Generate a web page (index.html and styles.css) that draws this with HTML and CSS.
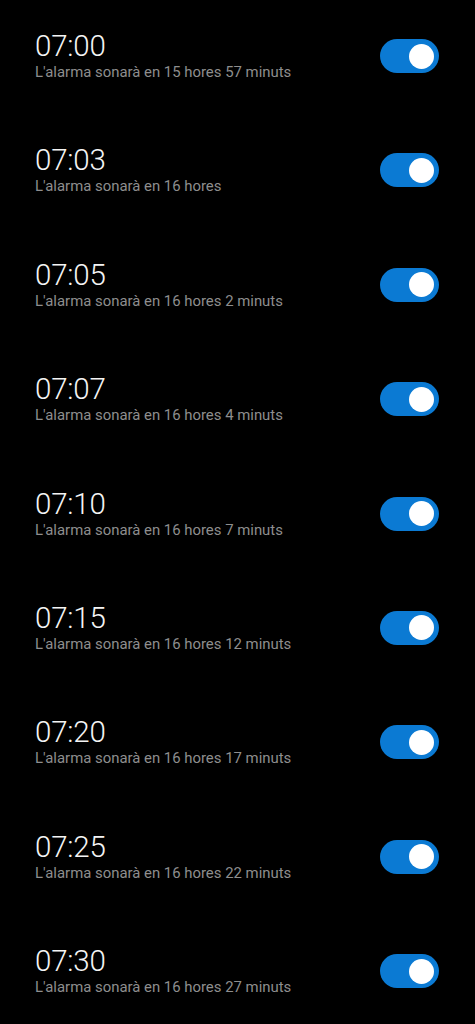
FILE: index.html
```html
<!DOCTYPE html>
<html>
<head>
<meta charset="utf-8">
<link rel="stylesheet" href="styles.css">
</head>
<body>
<div class="list">
  <div class="row"><div class="info"><div class="time">07:00</div><div class="sub">L'alarma sonarà en 15 hores 57 minuts</div></div><div class="toggle"><span class="knob"></span></div></div>
  <div class="row"><div class="info"><div class="time">07:03</div><div class="sub">L'alarma sonarà en 16 hores</div></div><div class="toggle"><span class="knob"></span></div></div>
  <div class="row"><div class="info"><div class="time">07:05</div><div class="sub">L'alarma sonarà en 16 hores 2 minuts</div></div><div class="toggle"><span class="knob"></span></div></div>
  <div class="row"><div class="info"><div class="time">07:07</div><div class="sub">L'alarma sonarà en 16 hores 4 minuts</div></div><div class="toggle"><span class="knob"></span></div></div>
  <div class="row"><div class="info"><div class="time">07:10</div><div class="sub">L'alarma sonarà en 16 hores 7 minuts</div></div><div class="toggle"><span class="knob"></span></div></div>
  <div class="row"><div class="info"><div class="time">07:15</div><div class="sub">L'alarma sonarà en 16 hores 12 minuts</div></div><div class="toggle"><span class="knob"></span></div></div>
  <div class="row"><div class="info"><div class="time">07:20</div><div class="sub">L'alarma sonarà en 16 hores 17 minuts</div></div><div class="toggle"><span class="knob"></span></div></div>
  <div class="row"><div class="info"><div class="time">07:25</div><div class="sub">L'alarma sonarà en 16 hores 22 minuts</div></div><div class="toggle"><span class="knob"></span></div></div>
  <div class="row"><div class="info"><div class="time">07:30</div><div class="sub">L'alarma sonarà en 16 hores 27 minuts</div></div><div class="toggle"><span class="knob"></span></div></div>
</div>
</body>
</html>
```
FILE: styles.css
```css
html, body {
  margin: 0;
  padding: 0;
  background: #000;
  height: 1024px;
  overflow: hidden;
}
body {
  font-family: Roboto, "Noto Sans", sans-serif;
}
.list {
  display: flex;
  flex-direction: column;
  padding-top: 29px;
}
.row {
  height: 114.4px;
  display: flex;
  align-items: flex-start;
  justify-content: space-between;
  padding: 0 36px 0 35px;
  box-sizing: border-box;
}
.info {
  display: flex;
  flex-direction: column;
}
.time {
  color: #f4f4f4;
  font-size: 29.5px;
  line-height: 34px;
  font-weight: 300;
  letter-spacing: -0.2px;
}
.sub {
  color: #8e8e8e;
  font-size: 14.9px;
  line-height: 18px;
  margin-top: 0;
}
.toggle {
  width: 59px;
  height: 34px;
  border-radius: 17px;
  background: #0b7ad3;
  margin-top: 10px;
  display: flex;
  align-items: center;
  justify-content: flex-end;
  padding-right: 5px;
  box-sizing: border-box;
}
.knob {
  width: 25px;
  height: 25px;
  border-radius: 50%;
  background: #fff;
}
```
